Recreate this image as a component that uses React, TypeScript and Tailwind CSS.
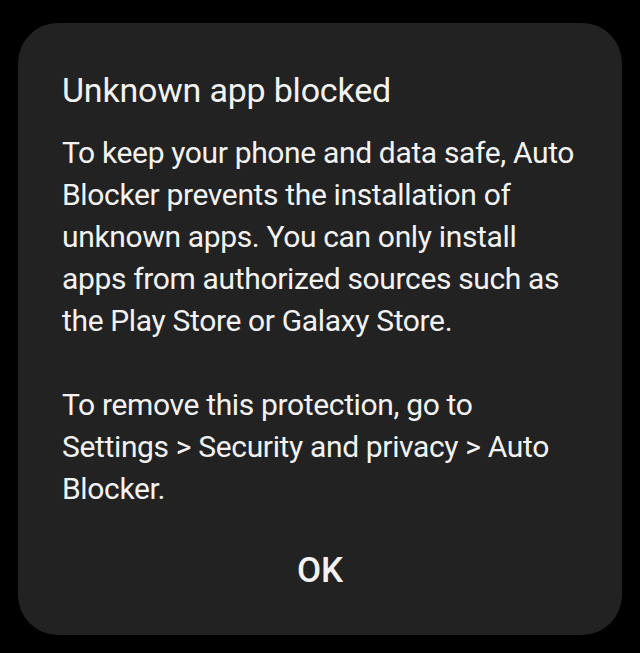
export default function App() {
  return (
    <div className="w-[640px] h-[653px] bg-black pt-[23px] pl-[18px]" style={{ fontFamily: "Roboto, 'Noto Sans', sans-serif" }}>
      <div className="w-[604px] h-[612px] bg-[#222222] rounded-[40px] pl-[44px] pr-[44px] pt-[50px] flex flex-col text-[#f2f2f2]">
        <h1 className="text-[34px] leading-[34px] font-normal tracking-[-0.2px]">Unknown app blocked</h1>
        <div className="mt-[25px] text-[30px] leading-[42px] tracking-[-0.35px]">
          <p>To keep your phone and data safe, Auto Blocker prevents the installation of unknown apps. You can only install apps from authorized sources such as the Play Store or Galaxy Store.</p>
          <p className="mt-[42px]">To remove this protection, go to Settings &gt; Security and privacy &gt; Auto Blocker.</p>
        </div>
        <div className="mt-[43px] text-center text-[35px] leading-[35px] font-medium">OK</div>
      </div>
    </div>
  );
}
